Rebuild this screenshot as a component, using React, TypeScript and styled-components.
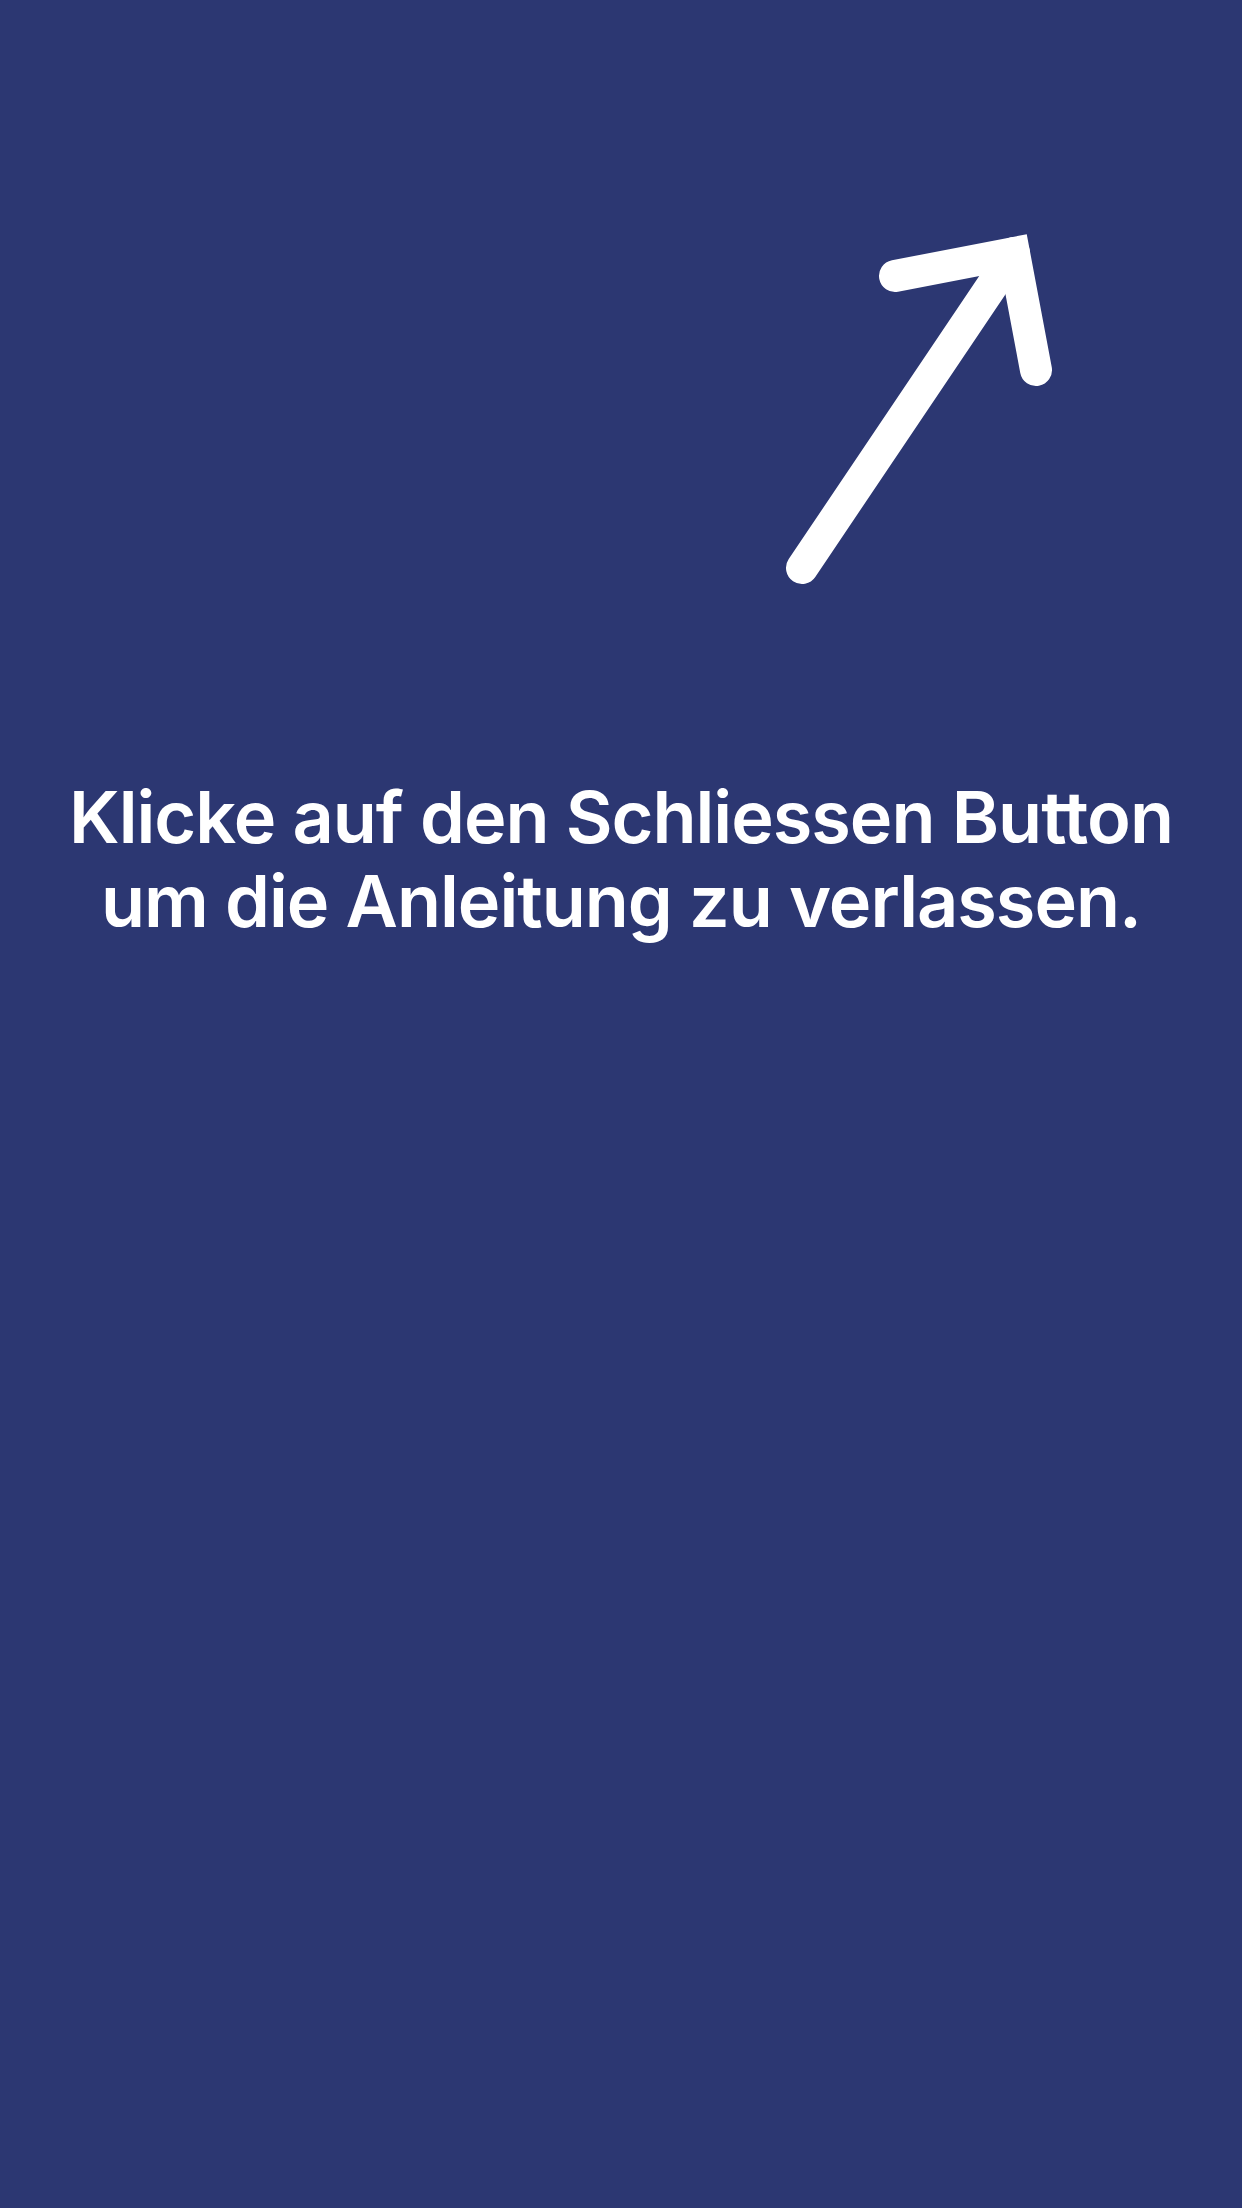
import React from "react";
import styled, { createGlobalStyle } from "styled-components";

const GlobalStyle = createGlobalStyle`
  html, body {
    margin: 0;
    padding: 0;
    background: #2c3772;
  }
  * { box-sizing: border-box; }
`;

const Screen = styled.div`
  width: 1242px;
  min-height: 2208px;
  background: #2c3772;
  display: flex;
  flex-direction: column;
  font-family: Inter, "Noto Sans", sans-serif;
`;

const ArrowRow = styled.div`
  display: flex;
  justify-content: flex-end;
  padding: 210px 172px 0 0;
`;

const Message = styled.p`
  margin: 175px 0 0;
  padding: 0 40px;
  color: #ffffff;
  font-size: 72px;
  font-weight: 600;
  line-height: 84px;
  text-align: center;
  letter-spacing: -1px;
`;

const PointerArrow = () => (
  <svg width="300" height="390" viewBox="0 0 300 390" aria-hidden="true">
    <g fill="none" stroke="#ffffff" strokeWidth="32" strokeLinecap="round" strokeLinejoin="miter">
      <path d="M32 358 L244 43" />
      <path d="M125 66 L244 43 L266 160" />
    </g>
  </svg>
);

export default function App() {
  return (
    <>
      <GlobalStyle />
      <Screen>
        <ArrowRow>
          <PointerArrow />
        </ArrowRow>
        <Message>
          Klicke auf den Schliessen Button
          <br />
          um die Anleitung zu verlassen.
        </Message>
      </Screen>
    </>
  );
}
